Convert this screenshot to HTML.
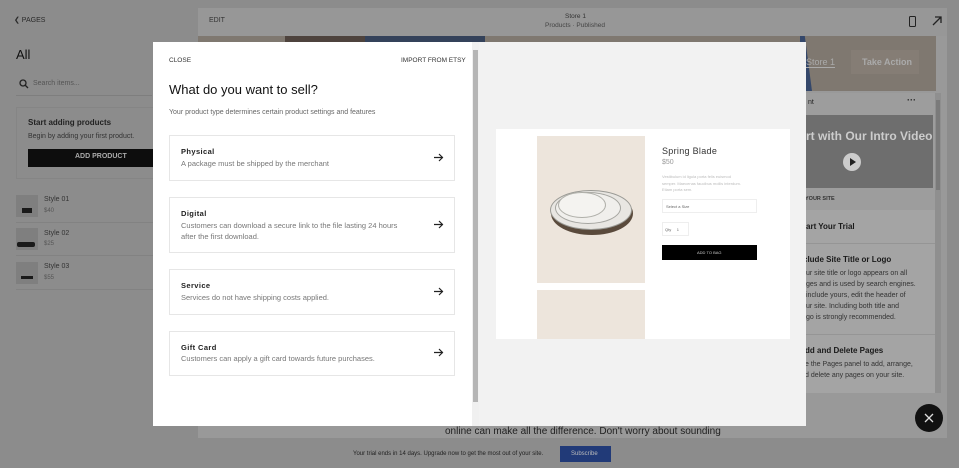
<!DOCTYPE html>
<html><head><style>
*{margin:0;padding:0;box-sizing:border-box}
body{width:959px;height:468px;overflow:hidden;background:#8c8c8c;font-family:"Liberation Sans",sans-serif;position:relative}
.a{position:absolute}
.t{white-space:nowrap}
</style></head><body>
<!-- left sidebar -->
<div class="a t" style="left:14px;top:16px;font-size:7px;color:#2a2a2a">&#10094; PAGES</div>
<div class="a t" style="left:16px;top:47px;font-size:13px;color:#111">All</div>
<div class="a" style="left:16px;top:73px;width:136px;height:23px;border-bottom:1px solid #7e7e7e"></div>
<svg class="a" style="left:19px;top:79px" width="10" height="10"><circle cx="4" cy="4" r="3" fill="none" stroke="#222" stroke-width="1.3"/><path d="M6 6 9 9" stroke="#222" stroke-width="1.3"/></svg>
<div class="a t" style="left:33px;top:80px;font-size:7px;color:#555">Search items...</div>
<div class="a" style="left:16px;top:107px;width:140px;height:72px;border:1px solid #858585"></div>
<div class="a t" style="left:28px;top:118px;font-size:8px;font-weight:bold;color:#222">Start adding products</div>
<div class="a t" style="left:28px;top:133px;font-size:7px;color:#333">Begin by adding your first product.</div>
<div class="a" style="left:28px;top:149px;width:126px;height:18px;background:#0d0d0d"></div>
<div class="a t" style="left:75px;top:153px;font-size:7px;color:#aaa;font-weight:bold">ADD PRODUCT</div>
<div class="a" style="left:16px;top:195px;width:22px;height:22px;background:#7f7f7f"></div>
<div class="a" style="left:16px;top:228px;width:22px;height:22px;background:#7f7f7f"></div>
<div class="a" style="left:16px;top:262px;width:22px;height:22px;background:#7f7f7f"></div>
<div class="a" style="left:22px;top:208px;width:10px;height:5px;background:#1a1a1a"></div>
<div class="a" style="left:17px;top:242px;width:18px;height:5px;background:#1a1a1a;border-radius:2px"></div>
<div class="a" style="left:21px;top:276px;width:12px;height:3px;background:#1a1a1a"></div>
<div class="a t" style="left:44px;top:196px;font-size:7px;color:#333">Style 01</div><div class="a t" style="left:44px;top:208px;font-size:6px;color:#555">$40</div>
<div class="a t" style="left:44px;top:230px;font-size:7px;color:#333">Style 02</div><div class="a t" style="left:44px;top:241px;font-size:6px;color:#555">$25</div>
<div class="a t" style="left:44px;top:263px;font-size:7px;color:#333">Style 03</div><div class="a t" style="left:44px;top:275px;font-size:6px;color:#555">$55</div>
<div class="a" style="left:16px;top:222px;width:140px;border-top:1px solid #828282"></div>
<div class="a" style="left:16px;top:255px;width:140px;border-top:1px solid #828282"></div>
<div class="a" style="left:16px;top:289px;width:140px;border-top:1px solid #828282"></div>
<!-- editor frame -->
<div class="a" style="left:198px;top:8px;width:749px;height:430px;background:#999"></div>
<div class="a" style="left:198px;top:8px;width:749px;height:28px;background:#979797"></div>
<div class="a t" style="left:209px;top:17px;font-size:7px;color:#333">EDIT</div>
<div class="a t" style="left:565px;top:13px;font-size:6.5px;color:#333">Store 1</div>
<div class="a t" style="left:545px;top:22px;font-size:6.5px;color:#444">Products · Published</div>
<div class="a" style="left:909px;top:16px;width:7px;height:11px;border:1.3px solid #222;border-radius:1.5px"></div>
<svg class="a" style="left:932px;top:16px" width="10" height="10"><path d="M1 9 9 1M3 1h6v6" stroke="#222" stroke-width="1.3" fill="none"/></svg>
<div class="a" style="left:198px;top:36px;width:738px;height:55px;background:#7f7870"></div>
<div class="a" style="left:285px;top:36px;width:80px;height:8px;background:#4e433d"></div>
<div class="a" style="left:365px;top:36px;width:120px;height:8px;background:#34425a"></div>
<div class="a" style="left:800px;top:36px;width:12px;height:55px;background:#34476a;clip-path:polygon(0 0,40% 0,100% 100%,0 100%)"></div>
<div class="a t" style="left:806px;top:57px;font-size:9px;color:#aaa;border-bottom:1px solid #aaa">Store 1</div>
<div class="a" style="left:851px;top:50px;width:68px;height:24px;background:#857d75"></div>
<div class="a t" style="left:862px;top:57px;font-size:9px;font-weight:bold;color:#aaa">Take Action</div>
<div class="a" style="left:790px;top:93px;width:145px;height:300px;background:#9d9d9d"></div>
<div class="a t" style="left:808px;top:99px;font-size:7px;color:#222">nt</div>
<div class="a t" style="left:907px;top:95px;font-size:9px;color:#222;font-weight:bold">···</div>
<div class="a" style="left:790px;top:115px;width:143px;height:73px;background:#6e6e6e;overflow:hidden">
<div class="a t" style="left:16px;top:14px;font-size:12px;font-weight:bold;color:#ccc">rt with Our Intro Video</div></div>
<div class="a" style="left:843px;top:153px;width:18px;height:18px;border-radius:50%;background:#ccc"></div>
<div class="a" style="left:850px;top:158px;border-left:6px solid #222;border-top:4px solid transparent;border-bottom:4px solid transparent"></div>
<div class="a t" style="left:805px;top:196px;font-size:5.5px;font-weight:bold;color:#333">YOUR SITE</div>
<div class="a" style="left:790px;top:210px;width:145px;height:183px;background:#a4a4a4"></div>
<div class="a t" style="left:806px;top:222px;font-size:8px;font-weight:bold;color:#1a1a1a">art Your Trial</div>
<div class="a" style="left:790px;top:243px;width:145px;border-top:1px solid #959595"></div>
<div class="a t" style="left:803px;top:255px;font-size:8px;font-weight:bold;color:#1a1a1a">clude Site Title or Logo</div>
<div class="a" style="left:806px;top:268px;font-size:7px;line-height:11px;color:#333;white-space:nowrap">ur site title or logo appears on all<br>ges and is used by search engines.<br>include yours, edit the header of<br>ur site. Including both title and<br>go is strongly recommended.</div>
<div class="a" style="left:790px;top:334px;width:145px;border-top:1px solid #959595"></div>
<div class="a t" style="left:805px;top:346px;font-size:8px;font-weight:bold;color:#1a1a1a">dd and Delete Pages</div>
<div class="a" style="left:805px;top:359px;font-size:7px;line-height:11px;color:#333;white-space:nowrap">e the Pages panel to add, arrange,<br>d delete any pages on your site.</div>
<div class="a" style="left:935px;top:93px;width:6px;height:300px;background:#8f8f8f"></div>
<div class="a" style="left:936px;top:100px;width:4px;height:90px;background:#7a7a7a"></div>
<div class="a t" style="left:445px;top:426px;font-size:10px;color:#222">online can make all the difference. Don't worry about sounding</div>
<div class="a" style="left:915px;top:404px;width:28px;height:28px;border-radius:50%;background:#111"></div>
<svg class="a" style="left:924px;top:413px" width="10" height="10"><path d="M1 1 9 9M9 1 1 9" stroke="#ddd" stroke-width="1.3"/></svg>
<!-- bottom bar -->
<div class="a t" style="left:353px;top:451px;font-size:6px;color:#222">Your trial ends in 14 days. Upgrade now to get the most out of your site.</div>
<div class="a" style="left:560px;top:446px;width:51px;height:16px;background:#213a78"></div>
<div class="a t" style="left:571px;top:451px;font-size:6px;color:#bbb">Subscribe</div>
<!-- modal -->
<div class="a" style="left:153px;top:42px;width:319px;height:384px;background:#fff"></div>
<div class="a" style="left:472px;top:42px;width:7px;height:384px;background:#f0f0f0"></div>
<div class="a" style="left:473px;top:50px;width:5px;height:352px;background:#b5b5b5"></div>
<div class="a" style="left:479px;top:42px;width:327px;height:384px;background:#f2f2f2"></div>
<div class="a t" style="left:169px;top:57px;font-size:6.5px;color:#333">CLOSE</div>
<div class="a t" style="left:401px;top:57px;font-size:6.5px;color:#333">IMPORT FROM ETSY</div>
<div class="a t" style="left:169px;top:82px;font-size:13px;color:#111">What do you want to sell?</div>
<div class="a t" style="left:169px;top:109px;font-size:7px;color:#666">Your product type determines certain product settings and features</div>
<div class="a" style="left:169px;top:135px;width:286px;height:46px;border:1px solid #e6e6e6"></div>
<div class="a" style="left:169px;top:197px;width:286px;height:56px;border:1px solid #e6e6e6"></div>
<div class="a" style="left:169px;top:269px;width:286px;height:46px;border:1px solid #e6e6e6"></div>
<div class="a" style="left:169px;top:331px;width:286px;height:45px;border:1px solid #e6e6e6"></div>
<div class="a t" style="left:181px;top:147px;font-size:7.5px;font-weight:bold;color:#222;letter-spacing:.4px">Physical</div>
<div class="a t" style="left:181px;top:159px;font-size:7.5px;color:#777">A package must be shipped by the merchant</div>
<div class="a t" style="left:181px;top:209px;font-size:7.5px;font-weight:bold;color:#222;letter-spacing:.4px">Digital</div>
<div class="a" style="left:181px;top:220px;font-size:7.5px;line-height:11px;color:#777;white-space:nowrap">Customers can download a secure link to the file lasting 24 hours<br>after the first download.</div>
<div class="a t" style="left:181px;top:281px;font-size:7.5px;font-weight:bold;color:#222;letter-spacing:.4px">Service</div>
<div class="a t" style="left:181px;top:293px;font-size:7.5px;color:#777">Services do not have shipping costs applied.</div>
<div class="a t" style="left:181px;top:343px;font-size:7.5px;font-weight:bold;color:#222;letter-spacing:.4px">Gift Card</div>
<div class="a t" style="left:181px;top:354px;font-size:7.5px;color:#777">Customers can apply a gift card towards future purchases.</div>
<svg class="a" style="left:434px;top:153px" width="10" height="9"><path d="M0 4.5h9M5 1l3.5 3.5L5 8" stroke="#222" stroke-width="1.2" fill="none"/></svg>
<svg class="a" style="left:434px;top:220px" width="10" height="9"><path d="M0 4.5h9M5 1l3.5 3.5L5 8" stroke="#222" stroke-width="1.2" fill="none"/></svg>
<svg class="a" style="left:434px;top:287px" width="10" height="9"><path d="M0 4.5h9M5 1l3.5 3.5L5 8" stroke="#222" stroke-width="1.2" fill="none"/></svg>
<svg class="a" style="left:434px;top:348px" width="10" height="9"><path d="M0 4.5h9M5 1l3.5 3.5L5 8" stroke="#222" stroke-width="1.2" fill="none"/></svg>
<!-- product preview -->
<div class="a" style="left:496px;top:129px;width:294px;height:210px;background:#fff"></div>
<div class="a" style="left:537px;top:136px;width:108px;height:147px;background:#ede5dc"></div>
<div class="a" style="left:537px;top:290px;width:108px;height:49px;background:#ede5dc"></div>
<div class="a" style="left:551px;top:192px;width:82px;height:43px;border-radius:50%;background:#5a4a3c"></div>
<div class="a" style="left:550px;top:190px;width:82px;height:40px;border-radius:50%;background:#e8e6e2;border:1px solid #9a9a95"></div>
<div class="a" style="left:555px;top:192px;width:66px;height:32px;border-radius:50%;background:#f0efec;border:1px solid #a5a5a0"></div>
<div class="a" style="left:558px;top:192px;width:48px;height:26px;border-radius:50%;background:#f4f3f0;border:1px solid #b0b0aa"></div>
<div class="a t" style="left:662px;top:146px;font-size:9px;color:#333;letter-spacing:.3px">Spring Blade</div>
<div class="a t" style="left:662px;top:159px;font-size:7px;color:#999">$50</div>
<div class="a" style="left:662px;top:174px;font-size:4px;line-height:6.5px;color:#bbb;white-space:nowrap">Vestibulum id ligula porta felis euismod<br>semper. Maecenas faucibus mollis interdum.<br>Etiam porta sem.</div>
<div class="a" style="left:662px;top:199px;width:95px;height:14px;border:1px solid #eee"></div>
<div class="a t" style="left:666px;top:204px;font-size:4px;color:#666">Select a Size</div>
<div class="a" style="left:662px;top:222px;width:27px;height:14px;border:1px solid #eee"></div>
<div class="a t" style="left:665px;top:227px;font-size:4px;color:#666">Qty &nbsp;&nbsp;&nbsp; 1</div>
<div class="a" style="left:662px;top:245px;width:95px;height:15px;background:#000"></div>
<div class="a t" style="left:697px;top:250px;font-size:4px;color:#ccc">ADD TO BAG</div>
</body></html>
